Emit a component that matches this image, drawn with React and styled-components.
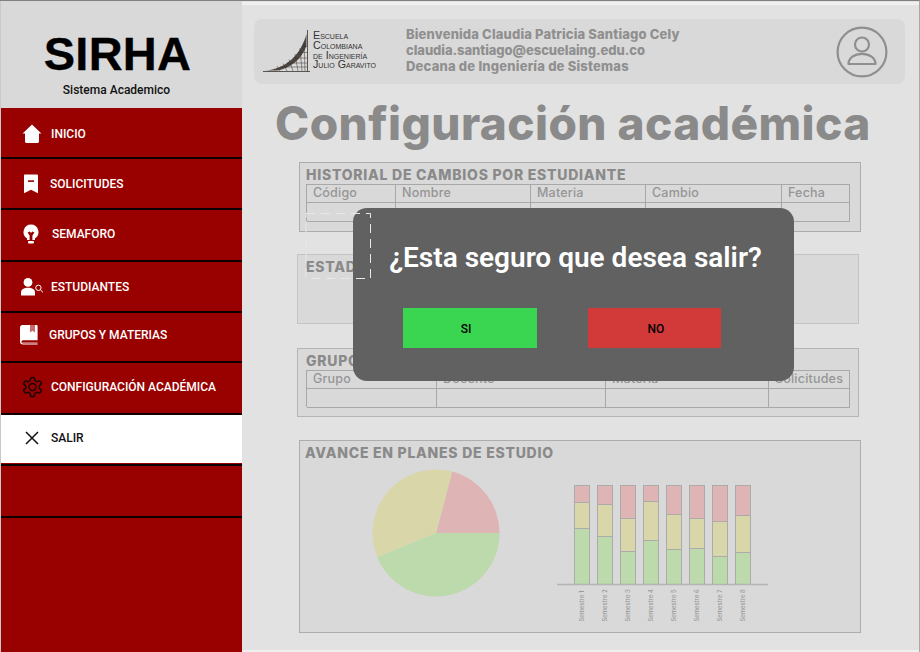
import styled, { createGlobalStyle } from 'styled-components'

const GlobalStyle = createGlobalStyle`
  html, body { margin: 0; padding: 0; }
  body { width: 920px; height: 652px; overflow: hidden; background: #e2e2e2; }
  * { box-sizing: border-box; }
`
const Page = styled.div`
  position: relative;
  width: 920px;
  height: 652px;
  display: flex;
  border-top: 1px solid #808080;
  border-right: 1px solid #a8a8a8;
  overflow: hidden;
`
const Sidebar = styled.aside`
  width: 242px;
  flex: none;
  display: flex;
  flex-direction: column;
  background: #990000;
  border-left: 1px solid #c9c9c9;
`
const Brand = styled.div`
  height: 107px;
  flex: none;
  background: #d9d9d9;
  display: flex;
  flex-direction: column;
  align-items: center;
  padding-top: 29px;
  padding-right: 8px;
`
const BrandName = styled.div`
  font: 700 47px/48px "Liberation Sans", Arial, sans-serif;
  letter-spacing: 0.3px;
  -webkit-text-stroke: 0.3px #000;
  color: #000;
`
const BrandSub = styled.div`
  margin-top: 5px;
  margin-right: 2px;
  font: 500 12px/14px Roboto, sans-serif;
  color: #111;
`
const MenuItem = styled.div`
  height: ${p => p.$h}px;
  flex: none;
  display: flex;
  align-items: center;
  padding-left: ${p => p.$pad}px;
  padding-top: ${p => (p.$dy > 0 ? p.$dy * 2 : 0)}px;
  padding-bottom: ${p => (p.$dy < 0 ? -p.$dy * 2 : 0)}px;
  background: ${p => (p.$active ? '#fff' : 'transparent')};
  color: ${p => (p.$active ? '#111' : '#fff')};
  border-bottom: ${p => (p.$plain ? 'none' : '2px solid #0c0000')};
  font: 500 12px/14px Roboto, sans-serif;
`
const IconSlot = styled.span`
  width: ${p => p.$w}px;
  flex: none;
  display: flex;
  align-items: center;
`
const Main = styled.main`
  flex: 1;
  min-width: 0;
  display: flex;
  flex-direction: column;
  padding: 17px 14px 0 12px;
  background: #e2e2e2;
  border-top: 3px solid #f0f0f0;
  border-bottom: 2px solid #efefef;
  margin-top: 1px;
`
const TopCard = styled.header`
  height: 65px;
  margin-top: -3px;
  flex: none;
  display: flex;
  align-items: center;
  padding: 0 17px 0 9px;
  background: #d9d9d9;
  border-radius: 8px;
`
const LogoWrap = styled.div`
  width: 143px;
  flex: none;
  display: flex;
  align-items: center;
`
const LogoText = styled.div`
  margin: 0 0 2px 2px;
  font: 400 10.7px/9.9px "Liberation Sans", Arial, sans-serif;
  font-variant: small-caps;
  color: #333;
  white-space: nowrap;
`
const Greeting = styled.div`
  flex: 1;
  padding-bottom: 4px;
  font: 800 13px/16px Inter, sans-serif;
  color: #8f8f8f;
`
const GreetingLine = styled.div`
  letter-spacing: ${p => p.$ls}px;
`
const Title = styled.h1`
  margin: 11px 0 0 21px;
  font: 800 46px/56px Inter, sans-serif;
  letter-spacing: 0.42px;
  color: #8a8a8a;
  white-space: nowrap;
`
const Panel = styled.section`
  flex: none;
  width: 562px;
  height: ${p => p.$h}px;
  margin-left: ${p => p.$left}px;
  margin-top: ${p => p.$top}px;
  padding: 3px 0 0 ${p => p.$pad}px;
  background: #d9d9d9;
  border: 1px solid ${p => p.$line};
`
const PanelTitle = styled.h2`
  margin: 0;
  height: 17px;
  font: 800 14px/17px Inter, sans-serif;
  letter-spacing: 0.75px;
  color: #8a8a8a;
  white-space: nowrap;
`
const Table = styled.div`
  width: 544px;
  height: 37px;
  margin-top: ${p => p.$top}px;
  display: grid;
  grid-template-columns: ${p => p.$cols};
  grid-template-rows: 18px 19px;
  border: 1px solid #a8a8a8;
  border-right: none;
  border-bottom: none;
`
const Cell = styled.div`
  padding-left: 6px;
  border-right: 1px solid #a8a8a8;
  border-bottom: 1px solid #a8a8a8;
  font: 500 12.5px/15px Inter, sans-serif;
  letter-spacing: 0.2px;
  color: #959595;
  white-space: nowrap;
  overflow: hidden;
`
const Charts = styled.div`
  display: flex;
  align-items: flex-start;
  padding: 8px 0 0 67px;
`
const BarWrap = styled.div`
  margin: 16px 0 0 57px;
`
const Dialog = styled.div`
  position: absolute;
  left: 353px;
  top: 207px;
  width: 441px;
  height: 173px;
  display: flex;
  flex-direction: column;
  align-items: center;
  padding-top: 32px;
  background: #616161;
  border-radius: 14px;
`
const DialogText = styled.div`
  margin-left: 4px;
  font: 600 28px/36px Roboto, sans-serif;
  color: #fff;
  white-space: nowrap;
`
const DialogButtons = styled.div`
  margin: 32px 23px 0 0;
  display: flex;
  gap: 51px;
`
const DialogButton = styled.button`
  width: ${p => p.$w}px;
  height: 40px;
  padding: 2px ${p => p.$right}px 0 ${p => p.$leftPad}px;
  border: none;
  background: ${p => p.$color};
  color: #000;
  font: 500 12px/14px Roboto, sans-serif;
`
const Selection = styled.svg`
  position: absolute;
  left: 305px;
  top: 212px;
  pointer-events: none;
`

const HomeIcon = () => (
  <svg width="20" height="20" viewBox="0 0 20 20" fill="#fff">
    <path d="M10 0.5 0.6 9.6H3V17.6a1.4 1.4 0 0 0 1.4 1.4H15.6a1.4 1.4 0 0 0 1.4-1.4V9.6h2.4z" />
  </svg>
)
const BookmarkIcon = () => (
  <svg width="16" height="20" viewBox="0 0 16 20">
    <path d="M1.5 0.5H14a1 1 0 0 1 1 1V19.3L8 15.8 1 19.3V1.5a1 1 0 0 1 .5-1z" fill="#fff" />
    <rect x="5" y="6.3" width="6" height="1.6" fill="#990000" />
  </svg>
)
const BulbIcon = () => (
  <svg width="16" height="20" viewBox="0 0 16 20">
    <path d="M8 0.5a7.5 7.5 0 0 0-4 13.8V16h8v-1.7A7.5 7.5 0 0 0 8 0.5z" fill="#fff" />
    <path d="M4.6 8.6 6.8 7.4 8 9 9.2 7.4 11.4 8.6 9.4 11.4V16H6.6V11.4z" fill="#990000" />
    <rect x="5" y="17" width="6" height="2.4" rx="1" fill="#fff" />
  </svg>
)
const StudentIcon = () => (
  <svg width="23" height="18" viewBox="0 0 23 18">
    <circle cx="7" cy="4.4" r="4.4" fill="#fff" />
    <path d="M0 17.6v-3.2C0 11.3 3 9.8 7 9.8s7 1.5 7 4.6v3.2z" fill="#fff" />
    <circle cx="17.4" cy="9.8" r="2.7" fill="none" stroke="#fff" strokeWidth="1" />
    <path d="M19.4 11.8 22 14.4" stroke="#fff" strokeWidth="1" />
  </svg>
)
const BookIcon = () => (
  <svg width="18" height="20" viewBox="0 0 18 20">
    <path d="M2.6 0H16.6a1 1 0 0 1 1 1V15.2H3a1.6 1.6 0 0 0 0 3.2H17.6V19.4H3A3 3 0 0 1 0 16.4V2.6A2.6 2.6 0 0 1 2.6 0z" fill="#fff" />
    <path d="M10 0H15V7.5L12.5 5.8 10 7.5z" fill="#c96a6a" />
    <path d="M2 17.6H17.6" stroke="#c96a6a" strokeWidth="1" />
  </svg>
)
const GearIcon = () => (
  <svg width="23" height="24" viewBox="0 0 24 24" fill="none" stroke="#1a0505" strokeWidth="1.6" strokeLinecap="round" strokeLinejoin="round">
    <path d="M12.22 2h-.44a2 2 0 0 0-2 2v.18a2 2 0 0 1-1 1.73l-.43.25a2 2 0 0 1-2 0l-.15-.08a2 2 0 0 0-2.73.73l-.22.38a2 2 0 0 0 .73 2.73l.15.1a2 2 0 0 1 1 1.72v.51a2 2 0 0 1-1 1.74l-.15.09a2 2 0 0 0-.73 2.73l.22.38a2 2 0 0 0 2.73.73l.15-.08a2 2 0 0 1 2 0l.43.25a2 2 0 0 1 1 1.73V20a2 2 0 0 0 2 2h.44a2 2 0 0 0 2-2v-.18a2 2 0 0 1 1-1.73l.43-.25a2 2 0 0 1 2 0l.15.08a2 2 0 0 0 2.73-.73l.22-.39a2 2 0 0 0-.73-2.73l-.15-.08a2 2 0 0 1-1-1.74v-.5a2 2 0 0 1 1-1.74l.15-.09a2 2 0 0 0 .73-2.73l-.22-.38a2 2 0 0 0-2.73-.73l-.15.08a2 2 0 0 1-2 0l-.43-.25a2 2 0 0 1-1-1.73V4a2 2 0 0 0-2-2z" />
    <circle cx="12" cy="12" r="3.6" />
  </svg>
)
const CloseIcon = () => (
  <svg width="14" height="14" viewBox="0 0 14 14" stroke="#111" strokeWidth="1.5">
    <path d="M1 1 13 13M13 1 1 13" />
  </svg>
)
const LogoMark = () => (
  <svg width="48" height="43" viewBox="0 0 48 43" fill="none" stroke="#3a3530">
    <path d="M0 41.5H47" strokeWidth="0.8" />
    <path d="M44.5 0V41.5" strokeWidth="0.8" />
    <path d="M3 40.5C24 38.5 38 24 43.5 4L43.5 16C38 30 27 38.5 14 40.5z" fill="#4d4640" stroke="none" />
    <path d="M14 36 17 41M20 33.5 24 41M26 29.5 30 41M32 24 35 41M37 18 39 41M41 12 42 41" strokeWidth="0.5" />
    <path d="M17 37H44.5M24 33H44.5M30 28H44.5M35 22.5H44.5M39 16.5H44.5" strokeWidth="0.5" />
  </svg>
)
const AvatarIcon = () => (
  <svg width="52" height="52" viewBox="0 0 52 52" fill="none" stroke="#8f8f8f" strokeWidth="2.2">
    <circle cx="26" cy="26" r="24.4" />
    <circle cx="26" cy="18.5" r="7" />
    <path d="M12.5 38C12.5 32 18.5 27.8 26 27.8S39.5 32 39.5 38z" strokeLinejoin="round" />
  </svg>
)
const PieChart = () => (
  <svg width="128" height="128" viewBox="0 0 128 128">
    <path d="M64 64H127.5A63.5 63.5 0 0 0 80.2 2.6z" fill="#dfb4b4" />
    <path d="M64 64 80.2 2.6A63.5 63.5 0 0 0 5.3 88.2z" fill="#d9d6a9" />
    <path d="M64 64 5.3 88.2A63.5 63.5 0 0 0 127.5 64z" fill="#bcdaab" />
  </svg>
)

// alturas de cada tramo en px: rojo, amarillo, verde
const semestres = [
  [17, 26, 56],
  [19, 32, 48],
  [33, 33, 33],
  [16, 39, 44],
  [29, 35, 35],
  [33, 30, 36],
  [36, 35, 28],
  [30, 37, 32],
]
const BarChart = () => (
  <svg width="212" height="140" viewBox="0 0 212 140">
    {semestres.map(([r, y, g], i) => {
      const x = 17.5 + i * 23
      return (
        <g key={i}>
          <rect x={x} y="0.5" width="15" height={r} fill="#dfb4b4" stroke="#ababab" />
          <rect x={x} y={0.5 + r} width="15" height={y} fill="#d9d6a9" stroke="#ababab" />
          <rect x={x} y={0.5 + r + y} width="15" height={g} fill="#bcdaab" stroke="#ababab" />
          <text
            transform={`translate(${x + 9.5} 136.5) rotate(-90)`}
            fontFamily="Inter, sans-serif"
            fontSize="6"
            fill="#8f8f8f"
          >
            Semestre {i + 1}
          </text>
        </g>
      )
    })}
    <path d="M0 99.5H211" stroke="#b4b4b4" strokeWidth="1.4" />
  </svg>
)

const menu = [
  { label: 'INICIO', icon: <HomeIcon />, w: 29, pad: 21, h: 51, dy: 1 },
  { label: 'SOLICITUDES', icon: <BookmarkIcon />, w: 27, pad: 22, h: 51, dy: 0 },
  { label: 'SEMAFORO', icon: <BulbIcon />, w: 29, pad: 22, h: 52, dy: -1 },
  { label: 'ESTUDIANTES', icon: <StudentIcon />, w: 30, pad: 20, h: 51, dy: 0 },
  { label: 'GRUPOS Y MATERIAS', icon: <BookIcon />, w: 29, pad: 19, h: 50, dy: -2 },
  { label: 'CONFIGURACIÓN ACADÉMICA', icon: <GearIcon />, w: 30, pad: 20, h: 52, dy: -1 },
]
const historial = ['Código', 'Nombre', 'Materia', 'Cambio', 'Fecha']
const grupos = ['Grupo', 'Docente', 'Materia', 'Solicitudes']

export default function App() {
  return (
    <Page>
      <GlobalStyle />
      <Sidebar>
        <Brand>
          <BrandName>SIRHA</BrandName>
          <BrandSub>Sistema Academico</BrandSub>
        </Brand>
        {menu.map(m => (
          <MenuItem key={m.label} $h={m.h} $pad={m.pad} $dy={m.dy}>
            <IconSlot $w={m.w}>{m.icon}</IconSlot>
            {m.label}
          </MenuItem>
        ))}
        <MenuItem $h={48} $pad={24} $dy={-1} $active $plain>
          <IconSlot $w={26}><CloseIcon /></IconSlot>
          SALIR
        </MenuItem>
        <MenuItem $h={3} />
        <MenuItem $h={52} />
      </Sidebar>
      <Main>
        <TopCard>
          <LogoWrap>
            <LogoMark />
            <LogoText>
              <div>Escuela</div>
              <div>Colombiana</div>
              <div>de Ingeniería</div>
              <div>Julio Garavito</div>
            </LogoText>
          </LogoWrap>
          <Greeting>
            <GreetingLine $ls={0.15}>Bienvenida Claudia Patricia Santiago Cely</GreetingLine>
            <GreetingLine $ls={-0.06}>claudia.santiago@escuelaing.edu.co</GreetingLine>
            <GreetingLine $ls={0.2}>Decana de Ingeniería de Sistemas</GreetingLine>
          </Greeting>
          <AvatarIcon />
        </TopCard>
        <Title>Configuración académica</Title>
        <Panel $h={70} $left={45} $top={11} $pad={6} $line="#adadad">
          <PanelTitle>HISTORIAL DE CAMBIOS POR ESTUDIANTE</PanelTitle>
          <Table $top={1} $cols="89px 135px 115px 136px 68px">
            {historial.map(h => <Cell key={h}>{h}</Cell>)}
            {historial.map(h => <Cell key={h} />)}
          </Table>
        </Panel>
        <Panel $h={70} $left={43} $top={22} $pad={8} $line="#c4c4c4">
          <PanelTitle>ESTADOS</PanelTitle>
        </Panel>
        <Panel $h={69} $left={43} $top={24} $pad={8} $line="#b5b5b5">
          <PanelTitle>GRUPOS</PanelTitle>
          <Table $top={1} $cols="130px 169px 163px 81px">
            {grupos.map(h => <Cell key={h}>{h}</Cell>)}
            {grupos.map(h => <Cell key={h} />)}
          </Table>
        </Panel>
        <Panel $h={193} $left={45} $top={23} $pad={5} $line="#adadad">
          <PanelTitle>AVANCE EN PLANES DE ESTUDIO</PanelTitle>
          <Charts>
            <PieChart />
            <BarWrap><BarChart /></BarWrap>
          </Charts>
        </Panel>
      </Main>
      <Dialog>
        <DialogText>¿Esta seguro que desea salir?</DialogText>
        <DialogButtons>
          <DialogButton $w={134} $right={8} $leftPad={0} $color="#3ad651">SI</DialogButton>
          <DialogButton $w={133} $right={0} $leftPad={3} $color="#d23a3a">NO</DialogButton>
        </DialogButtons>
      </Dialog>
      <Selection width="67" height="67" viewBox="0 0 67 67" fill="none">
        <rect x="1" y="0.5" width="64.5" height="65" stroke="#e8e8e8" strokeWidth="1" strokeDasharray="9 6" />
      </Selection>
    </Page>
  )
}
